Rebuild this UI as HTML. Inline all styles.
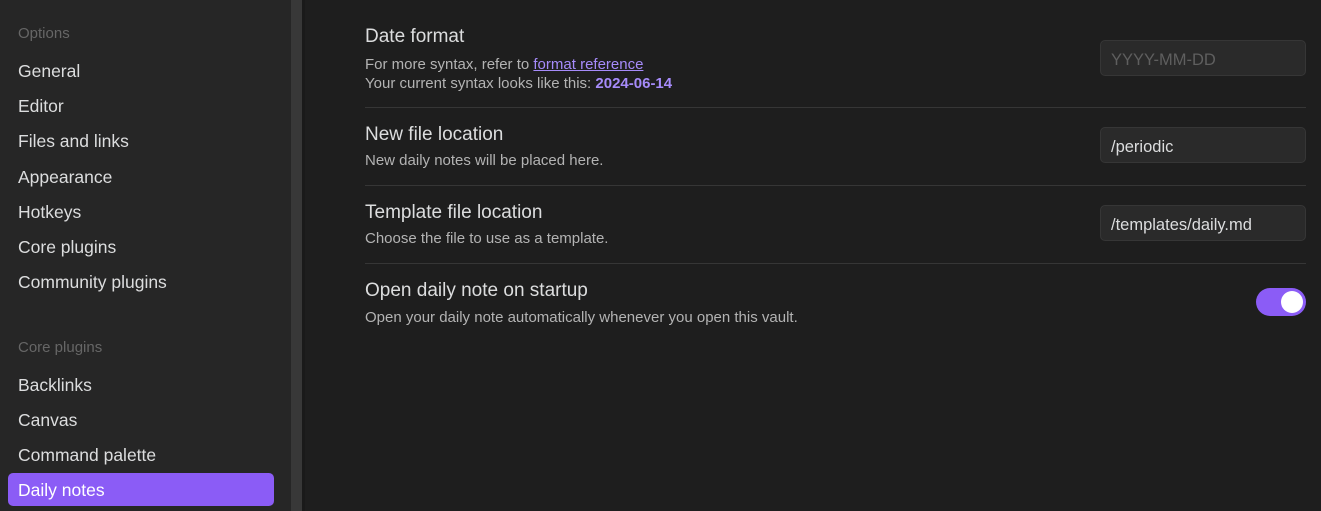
<!DOCTYPE html>
<html><head><style>
*{margin:0;padding:0;box-sizing:border-box}
body{width:1321px;height:511px;background:#1e1e1e;font-family:"Liberation Sans",sans-serif;position:relative;overflow:hidden}
.side{position:absolute;left:0;top:0;width:291px;height:511px;background:#262626}
.sb{position:absolute;left:291px;top:0;width:11px;height:511px;background:#383838}
.sb2{position:absolute;left:302px;top:0;width:3px;height:511px;background:#1a1a1a}
.h{position:absolute;left:18px;font-size:15px;color:#666}
.it{position:absolute;left:18px;font-size:17.5px;color:#dcddde;line-height:20px}
.act{position:absolute;left:8px;top:473px;width:266px;height:33px;background:#8b5cf6;border-radius:5px}
.t{position:absolute;left:365px;font-size:19px;color:#dcddde}
.d{position:absolute;left:365px;font-size:15px;color:#b3b3b3;line-height:19px}
.line{position:absolute;left:365px;width:941px;height:1px;background:#363636}
.in{position:absolute;left:1100px;width:206px;height:36px;background:#2a2a2a;border:1px solid #363636;border-radius:5px;font-size:16.5px;color:#dcddde;padding:0 10px;line-height:38px}
a{color:#a68bfa;text-decoration:underline}
b{color:#a68bfa}
</style></head><body>
<div class="side"></div><div class="sb"></div><div class="sb2"></div>
<div class="h" style="top:25px">Options</div>
<div class="it" style="top:61px">General</div>
<div class="it" style="top:96px">Editor</div>
<div class="it" style="top:131px">Files and links</div>
<div class="it" style="top:167px">Appearance</div>
<div class="it" style="top:202px">Hotkeys</div>
<div class="it" style="top:237px">Core plugins</div>
<div class="it" style="top:272px">Community plugins</div>
<div class="h" style="top:339px">Core plugins</div>
<div class="it" style="top:375px">Backlinks</div>
<div class="it" style="top:410px">Canvas</div>
<div class="it" style="top:445px">Command palette</div>
<div class="act"></div>
<div class="it" style="top:480px;color:#fff">Daily notes</div>

<div class="t" style="top:26px">Date format</div>
<div class="d" style="top:55px">For more syntax, refer to <a>format reference</a><br>Your current syntax looks like this: <b>2024-06-14</b></div>
<div class="in" style="top:40px;color:#5f5f5f">YYYY-MM-DD</div>
<div class="line" style="top:107px"></div>
<div class="t" style="top:124px">New file location</div>
<div class="d" style="top:151px">New daily notes will be placed here.</div>
<div class="in" style="top:127px">/periodic</div>
<div class="line" style="top:185px"></div>
<div class="t" style="top:202px">Template file location</div>
<div class="d" style="top:229px">Choose the file to use as a template.</div>
<div class="in" style="top:205px">/templates/daily.md</div>
<div class="line" style="top:263px"></div>
<div class="t" style="top:280px">Open daily note on startup</div>
<div class="d" style="top:308px">Open your daily note automatically whenever you open this vault.</div>
<div style="position:absolute;left:1256px;top:288px;width:50px;height:28px;border-radius:14px;background:#8b5cf6"></div>
<div style="position:absolute;left:1281px;top:291px;width:22px;height:22px;border-radius:50%;background:#fff"></div>
</body></html>
